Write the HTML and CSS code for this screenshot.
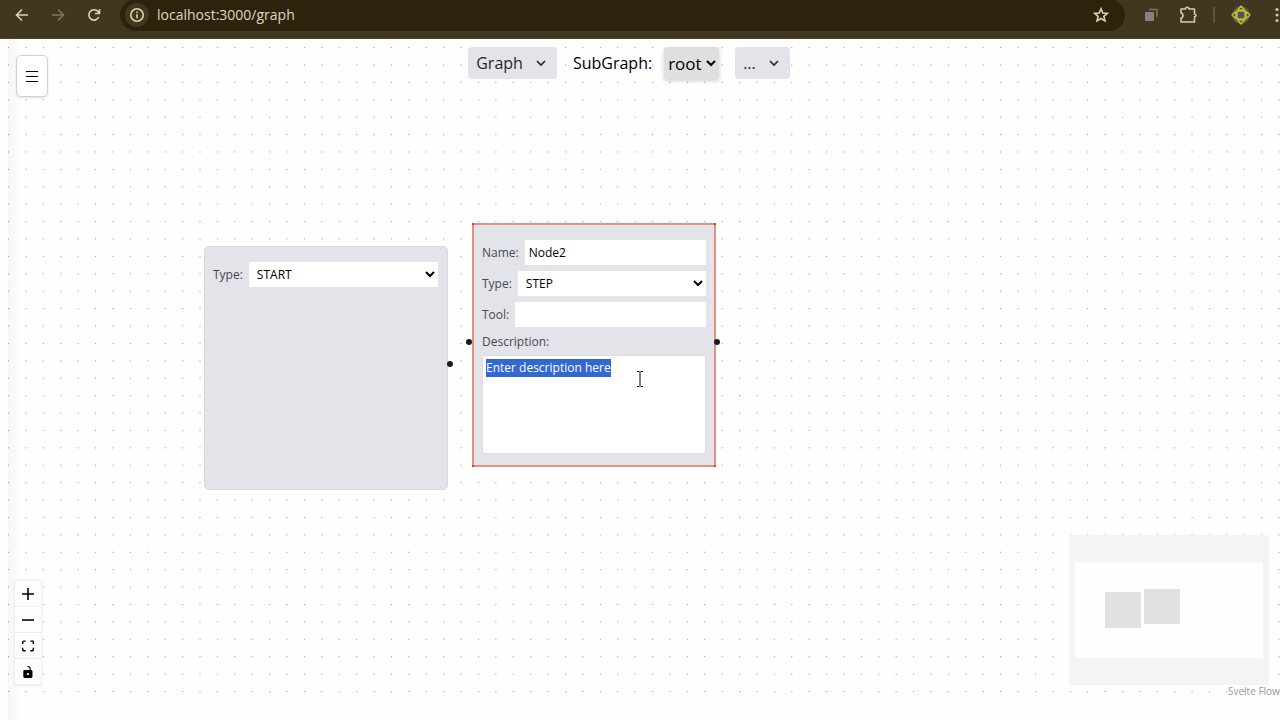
FILE: index.html
```html
<!DOCTYPE html>
<html lang="en">
<head>
  <meta charset="UTF-8">
  <title>Graph</title>
  <link rel="stylesheet" href="styles.css">
</head>
<body>
  <header class="browser">
    <button class="nav-btn" aria-label="Back">
      <svg width="16" height="16" viewBox="0 0 16 16"><path d="M14 8H3M8 2.5L2.500 8 8 13.500"/></svg>
    </button>
    <button class="nav-btn nav-off" aria-label="Forward">
      <svg width="16" height="16" viewBox="0 0 16 16"><path d="M2 8h11M8 2.500L13.500 8 8 13.500"/></svg>
    </button>
    <button class="nav-btn" aria-label="Reload">
      <svg width="16" height="16" viewBox="0 0 16 16"><path d="M12.800 10A5.200 5.200 0 1 1 12 4.500L13.300 6M13.500 2v4.500H9"/></svg>
    </button>
    <div class="address">
      <button class="site-info" aria-label="Site information">
        <svg width="16" height="16" viewBox="0 0 16 16"><circle cx="8" cy="8" r="6.200"/><path d="M8 7.200v4M8 4.500v1.500"/></svg>
      </button>
      <input class="url" type="text" aria-label="Address" value="localhost:3000/graph">
      <button class="star" aria-label="Bookmark">
        <svg width="16" height="16" viewBox="0 0 16 16"><path d="M8 1.800l1.800 4.200 4.600.4-3.500 3 1.100 4.500L8 11.500l-4 2.400 1.100-4.500-3.500-3 4.600-.4z"/></svg>
      </button>
    </div>
    <div class="extensions">
      <svg class="ext" width="16" height="16" viewBox="0 0 16 16"><path d="M6 2.500h8v7.500" fill="none" stroke="#77736c" stroke-width="1.500"/><rect x="2" y="5" width="9" height="9" rx="1" fill="#85837f"/></svg>
      <svg class="ext" width="20" height="20" viewBox="0 0 20 20"><path d="M3 4h4.500c0-2.400 3.400-2.400 3.400 0H16.500v5c2 .2 2 2.600 0 2.800V17H3v-4c2.600-.3 2.600-4.700 0-5z" fill="none" stroke="#d6cba2" stroke-width="1.600" stroke-linejoin="round"/></svg>
      <span class="divider"></span>
      <svg class="ext" width="20" height="20" viewBox="0 0 20 20"><circle cx="10" cy="10" r="9" fill="#56585a"/><path d="M10 1l3.500 4h-7zM10 19l3.500-4h-7zM1 10l4-3.500v7zM19 10l-4-3.500v7z" fill="#4a482e" stroke="#c9bd20" stroke-width="1.400" stroke-linejoin="round"/><rect x="6" y="6" width="8" height="8" fill="#45546e" stroke="#c9bd20" stroke-width="1.500"/></svg>
      <svg class="ext" width="8" height="16" viewBox="0 0 8 16" fill="#d6cba2"><circle cx="4" cy="2.500" r="1.500"/><circle cx="4" cy="8" r="1.500"/><circle cx="4" cy="13.500" r="1.500"/></svg>
    </div>
  </header>

  <main class="flow">
    <div class="edge-shadow"></div>
    <!-- dot grid, 20 units at 0.87 zoom -->
    <svg class="dots" width="100%" height="100%">
      <pattern id="grid" x="0" y="8" width="17.405" height="17.405" patternUnits="userSpaceOnUse">
        <circle cx="0.600" cy="0.600" r="0.600" fill="#85858e"/>
      </pattern>
      <rect width="100%" height="100%" fill="url(#grid)"/>
    </svg>

    <button class="menu-btn" aria-label="Menu">
      <svg width="12" height="12" viewBox="0 0 12 12"><path d="M0 1.500h12M0 6.500h12M0 11.500h12" stroke="#000" stroke-width="1"/></svg>
    </button>

    <div class="toolbar">
      <button class="drop">Graph
        <svg class="chevron" width="10" height="10" viewBox="0 0 10 10"><path d="M1 3l4 4 4-4"/></svg>
      </button>
      <label class="sub-label" for="subgraph">SubGraph:</label>
      <select class="sub-select" id="subgraph"><option>root</option></select>
      <button class="drop">...
        <svg class="chevron" width="10" height="10" viewBox="0 0 10 10"><path d="M1 3l4 4 4-4"/></svg>
      </button>
    </div>

    <section class="node node-start">
      <div class="row">
        <label for="type1">Type:</label>
        <select id="type1"><option>START</option></select>
      </div>
      <span class="handle handle-right"></span>
    </section>

    <section class="node node-step selected">
      <div class="row">
        <label for="name2">Name:</label>
        <input type="text" id="name2" value="Node2">
      </div>
      <div class="row">
        <label for="type2">Type:</label>
        <select id="type2"><option>STEP</option></select>
      </div>
      <div class="row">
        <label for="tool2">Tool:</label>
        <input type="text" id="tool2">
      </div>
      <label class="desc-label" for="desc2">Description:</label>
      <textarea id="desc2" spellcheck="false">Enter description here</textarea>
      <span class="handle handle-left"></span>
      <span class="handle handle-right"></span>
      <i class="corner tl"></i><i class="corner tr"></i><i class="corner bl"></i><i class="corner br"></i>
      <svg class="ibeam" width="8" height="16" viewBox="0 0 8 16"><path d="M1 .5h2.500M4.500 .5H7M4 1v14M1 15.500h2.500M4.500 15.500H7" stroke="#000" fill="none"/></svg>
    </section>

    <div class="controls">
      <button aria-label="Zoom in"><svg width="12" height="12" viewBox="0 0 32 32"><path d="M32 18.133H18.133V32h-4.266V18.133H0v-4.266h13.867V0h4.266v13.867H32z"/></svg></button>
      <button aria-label="Zoom out"><svg width="12" height="12" viewBox="0 0 32 32"><path d="M0 14h32v4.200H0z"/></svg></button>
      <button aria-label="Fit view"><svg width="12" height="12" viewBox="0 0 32 30"><path d="M3.692 4.630c0-.530.400-.938.939-.938h5.215V0H4.708C2.130 0 0 2.054 0 4.630v5.216h3.692V4.631zM27.354 0h-5.200v3.692h5.170c.530 0 .984.400.984.939v5.215H32V4.631A4.624 4.624 0 0027.354 0zm.954 24.830c0 .532-.400.940-.939.940h-5.215v3.768h5.215c2.577 0 4.631-2.130 4.631-4.707v-5.139h-3.692v5.139zm-23.677.940c-.531 0-.939-.400-.939-.940v-5.138H0v5.139c0 2.577 2.130 4.707 4.708 4.707h5.138V25.770H4.631z"/></svg></button>
      <button aria-label="Toggle lock"><svg width="12" height="12" viewBox="0 0 25 32"><path d="M21.333 10.667H19.810V7.619C19.810 3.429 16.380 0 12.190 0c-4.114 1.828-1.370 2.133.305 2.438 1.676.305 4.420 2.590 4.420 5.181v3.048H3.047A3.056 3.056 0 000 13.714v15.238A3.056 3.056 0 003.048 32h18.285a3.056 3.056 0 003.048-3.048V13.714a3.056 3.056 0 00-3.048-3.047zM12.190 24.533a3.056 3.056 0 01-3.047-3.047 3.056 3.056 0 013.047-3.048 3.056 3.056 0 013.048 3.048 3.056 3.056 0 01-3.048 3.047z"/></svg></button>
    </div>

    <svg class="minimap" width="200" height="150" viewBox="0 0 200 150">
      <rect width="200" height="150" fill="#f4f4f4"/>
      <rect x="6" y="27" width="188" height="96" fill="#fefefe"/>
      <rect x="36" y="57" width="36" height="36" fill="#e0e0e0"/>
      <rect x="75" y="54" width="36" height="35" fill="#e0e0e0"/>
    </svg>
    <a class="attribution" href="#">Svelte Flow</a>
  </main>
  <script>
    var desc = document.getElementById('desc2');
    desc.focus();
    desc.select();
  </script>
</body>
</html>
```
FILE: styles.css
```css
html, body { height: 100%; margin: 0; }
* { box-sizing: border-box; outline: none; }
body {
  display: flex; flex-direction: column; overflow: hidden;
  background: #fefefe; color: #000;
  font: 12px/18px "Open Sans", "Noto Sans", sans-serif;
}
button, input, select, textarea { font: inherit; color: inherit; border: 0; margin: 0; }
button { padding: 0; background: none; cursor: pointer; }
svg { display: block; flex: none; }

/* browser bar */
.browser {
  display: flex; align-items: center; flex: none;
  height: 39px; padding: 0 0 8px 14px;
  background: #41371e; border-bottom: 1px solid #4c4332;
}
.nav-btn { margin-right: 20px; }
.nav-btn svg, .site-info svg, .star svg { fill: none; stroke: #ded3aa; stroke-width: 1.6; }
.nav-off svg { stroke: #81765a; }
.address {
  display: flex; align-items: center; flex: 1;
  height: 32px; margin-left: -2px; padding: 0 16px 0 5px;
  background: #2d230d; border-radius: 16px;
}
.site-info {
  display: flex; align-items: center; justify-content: center;
  width: 24px; height: 24px; border-radius: 50%; background: #41371e;
}
.url { flex: 1; padding: 0 8px; background: none; color: #ded6bd; font-size: 14px; line-height: 20px; }
.extensions { display: flex; align-items: center; padding-left: 18px; }
.ext { margin-right: 19px; }
.ext:last-child { margin: 0 -1px 0 3px; }
.divider { width: 2px; height: 16px; margin: 0 16px 0 -4px; background: #5d543b; }

/* canvas */
.flow { position: relative; flex: 1; margin: 0 0 20px 8px; }
.dots { position: absolute; top: 0; left: 0; }
.edge-shadow {
  position: absolute; top: 0; bottom: -20px; left: 0; width: 14px;
  background: linear-gradient(to right, #f6f6f8, rgba(254, 254, 254, 0));
}
.menu-btn {
  position: absolute; top: 16px; left: 8px;
  display: flex; align-items: center; justify-content: center;
  width: 32px; height: 42px;
  background: #fff; border: 1px solid #d1d1dc; border-radius: 5px;
  box-shadow: 0 1px 2px rgba(0, 0, 0, .12);
}
.toolbar {
  position: relative; display: flex; align-items: center; justify-content: center;
  padding: 8px 30px 0 0; font-size: 16px; line-height: 24px;
}
.drop {
  display: flex; align-items: center; gap: 13px;
  height: 32px; padding: 0 11px 0 8px;
  background: #e3e4ea; color: #23262f; border-radius: 4px;
}
.chevron { fill: none; stroke: #23262f; stroke-width: 1.6; }
.sub-label { margin: 0 12px 0 16px; }
.sub-select {
  height: 32px; width: 55px; margin-right: 16px; padding: 0;
  background: #dfdfdf; border-radius: 3px; font-size: 17px;
  box-shadow: 0 2px 4px rgba(0, 0, 0, .18);
}

/* nodes */
.node {
  position: absolute; width: 244px; height: 244px; padding: 15px 9px 0 8px;
  background: #e3e4ea; border: 1px solid #d8d8e2; border-radius: 5px;
  color: #464952;
}
.node-start { left: 196px; top: 207px; }
.node-step { left: 464px; top: 184px; }
.selected { border: 2px solid #e5917b; border-radius: 0; padding: 15px 8px 0; }
.row { display: flex; align-items: center; gap: 6px; height: 25px; margin-bottom: 6px; }
.row input, .row select {
  flex: 1; min-width: 0; height: 25px; padding: 0 4px;
  background: #fff; color: #000; border-radius: 0;
}
.desc-label { display: block; margin-bottom: 4px; }
.node textarea {
  display: block; width: 100%; height: 99px; padding: 3px; resize: none;
  background: #fff; color: #000; border: 1px solid #dcdce4; border-radius: 3px;
}
.node textarea::selection { background: #3367d1; color: #fff; }
.handle {
  position: absolute; top: 114px; width: 6px; height: 6px;
  border-radius: 50%; background: #1a192b;
}
.handle-left { left: -8px; }
.handle-right { right: -6px; }
.corner { position: absolute; width: 2px; height: 2px; background: #d0451f; }
.tl { top: -2px; left: -2px; }
.tr { top: -2px; right: -2px; }
.bl { bottom: -2px; left: -2px; }
.br { bottom: -2px; right: -2px; }
.ibeam { position: absolute; left: 162px; top: 146px; }

/* panels */
.controls {
  position: absolute; left: 7px; bottom: 15px; width: 26px;
  box-shadow: 0 0 2px 1px rgba(0, 0, 0, .08);
}
.controls button {
  display: flex; align-items: center; justify-content: center;
  width: 26px; height: 26px; background: #fefefe; border-bottom: 1px solid #eee;
}
.minimap { position: absolute; right: 11px; bottom: 15px; }
.attribution {
  position: absolute; left: calc(100% - 52px); bottom: 2px;
  color: #999; font-size: 10px; line-height: 14px;
  white-space: nowrap; text-decoration: none;
}
```
